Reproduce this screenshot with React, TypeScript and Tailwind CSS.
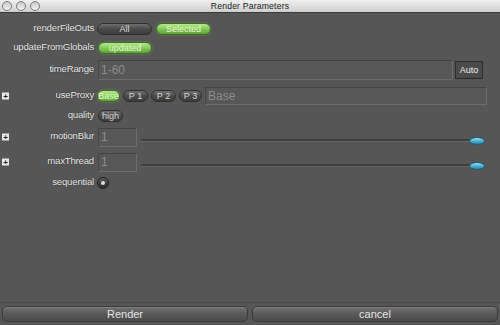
import React from 'react';

const font = "font-['Liberation_Sans',Arial,sans-serif]";

function PillButton({ label, on, w }: { label: string; on?: boolean; w: number }) {
  return (
    <div
      style={{ width: w }}
      className={
        on
          ? 'h-[12px] rounded-full border border-[#3f6a25] bg-gradient-to-b from-[#b6ea8a] via-[#84c95a] to-[#5ea23a] flex items-center justify-center text-[9px] leading-none text-[#e9f7cf] shadow-[0_0_2px_#9be07088]'
          : 'h-[12px] rounded-full border border-[#2f2f2f] bg-gradient-to-b from-[#707070] via-[#4a4a4a] to-[#3c3c3c] flex items-center justify-center text-[9px] leading-none text-[#d8d8d8]'
      }
    >
      {label}
    </div>
  );
}

function Label({ text, plus }: { text: string; plus?: boolean }) {
  return (
    <div className="relative h-full w-[96px] shrink-0">
      {plus ? (
        <span className="absolute left-[2px] top-1/2 -translate-y-1/2 flex h-[7px] w-[7px] items-center justify-center bg-[#e8e8e8] text-[8px] font-bold leading-none text-[#222]">
          +
        </span>
      ) : null}
      <div className="flex h-full -translate-y-[1.5px] items-center justify-end pr-[2px] text-[9.6px] leading-none tracking-[-0.2px] text-[#f4f4f4] [text-shadow:0_0_1px_#000]">
        {text}
      </div>
    </div>
  );
}

function Field({ value, w, h, size = 11 }: { value: string; w?: number; h: number; size?: number }) {
  return (
    <div
      style={{ width: w, height: h, fontSize: size }}
      className={`${w ? '' : 'flex-1'} flex items-center border border-[#6c6c6c] border-t-[#434343] border-l-[#474747] bg-[#575757] pl-[2px] leading-none text-[#8d8d8d]`}
    >
      {value}
    </div>
  );
}

function Slider() {
  return (
    <div className="relative ml-[4px] h-[20px] w-[344px]">
      <div className="absolute left-0 right-[10px] top-[12px] h-[2px] bg-[#3e3e3e]" />
      <div className="absolute left-0 right-[10px] top-[14px] h-[1px] bg-[#666]" />
      <div className="absolute right-0 top-[10px] h-[8px] w-[16px] rounded-[50%] border border-[#1f5f78] bg-gradient-to-b from-[#9fe0f5] via-[#4db0d2] to-[#2b84a6]" />
    </div>
  );
}

export default function App() {
  return (
    <div className={`${font} flex h-[325px] w-[500px] flex-col overflow-hidden bg-[#565656]`}>
      <div className="relative flex h-[13px] shrink-0 items-center justify-center border-b border-[#3a3a3a] bg-gradient-to-b from-[#f0f0f0] to-[#cfcfcf]">
        <div className="absolute left-[2px] top-[1px] flex gap-[4px]">
          {[0, 1, 2].map((i) => (
            <div key={i} className="h-[10px] w-[10px] rounded-full border border-[#7a7a7a] bg-gradient-to-b from-[#c8c8c8] to-[#f4f4f4]" />
          ))}
        </div>
        <span className="text-[8.6px] leading-none tracking-[0.2px] text-[#1a1a1a]">Render Parameters</span>
      </div>

      <div className="flex flex-col">
        <div className="mt-[8px] flex h-[16px] items-center">
          <Label text="renderFileOuts" />
          <div className="ml-[1px] flex gap-[4px]">
            <PillButton label="All" w={55} />
            <PillButton label="Selected" on w={55} />
          </div>
        </div>

        <div className="mt-[3px] flex h-[16px] items-center">
          <Label text="updateFromGlobals" />
          <div className="ml-[2px]">
            <PillButton label="updated" on w={54} />
          </div>
        </div>

        <div className="mt-[3px] flex h-[22px] items-center">
          <Label text="timeRange" />
          <div className="ml-[2px] flex w-[386px] items-center gap-[2px]">
            <Field value="1-60" w={355} h={20} size={12} />
            <div className="flex h-[18px] w-[28px] items-center justify-center border border-[#2c2c2c] bg-[#4b4b4b] text-[9px] leading-none text-[#f0f0f0]">
              Auto
            </div>
          </div>
        </div>

        <div className="mt-[5px] flex h-[20px] items-center">
          <Label text="useProxy" plus />
          <div className="ml-[1px] flex items-center gap-[3px]">
            <PillButton label="Base" on w={23} />
            <PillButton label="P 1" w={25} />
            <PillButton label="P 2" w={25} />
            <PillButton label="P 3" w={23} />
          </div>
          <div className="ml-[3px] w-[282px]">
            <Field value="Base" h={18} size={12} />
          </div>
        </div>

        <div className="mt-[2px] flex h-[16px] items-center">
          <Label text="quality" />
          <div className="ml-[2px]">
            <PillButton label="high" w={25} />
          </div>
        </div>

        <div className="mt-[3px] flex h-[20px] items-center">
          <Label text="motionBlur" plus />
          <div className="ml-[2px] flex items-center">
            <Field value="1" w={39} h={19} size={12} />
            <Slider />
          </div>
        </div>

        <div className="mt-[5px] flex h-[20px] items-center">
          <Label text="maxThread" plus />
          <div className="ml-[2px] flex items-center">
            <Field value="1" w={39} h={19} size={12} />
            <Slider />
          </div>
        </div>

        <div className="mt-[3px] flex h-[16px] items-center">
          <Label text="sequential" />
          <div className="ml-[1px] flex h-[12px] w-[12px] items-center justify-center rounded-full border border-[#222] bg-gradient-to-b from-[#5a5a5a] to-[#2a2a2a]">
            <div className="h-[4px] w-[4px] rounded-full bg-[#dcdcdc]" />
          </div>
        </div>
      </div>

      <div className="flex-1" />

      <div className="flex shrink-0 gap-[4px] border-t border-[#4a4a4a] px-[2px] pb-[3px] pt-[3px]">
        {['Render', 'cancel'].map((t) => (
          <div
            key={t}
            className="flex h-[16px] flex-1 items-center justify-center rounded-[5px] border border-[#3a3a3a] bg-gradient-to-b from-[#707070] via-[#5a5a5a] to-[#4a4a4a] text-[11px] leading-none text-[#e6e6e6] shadow-[inset_0_1px_0_#808080]"
          >
            {t}
          </div>
        ))}
      </div>
    </div>
  );
}
